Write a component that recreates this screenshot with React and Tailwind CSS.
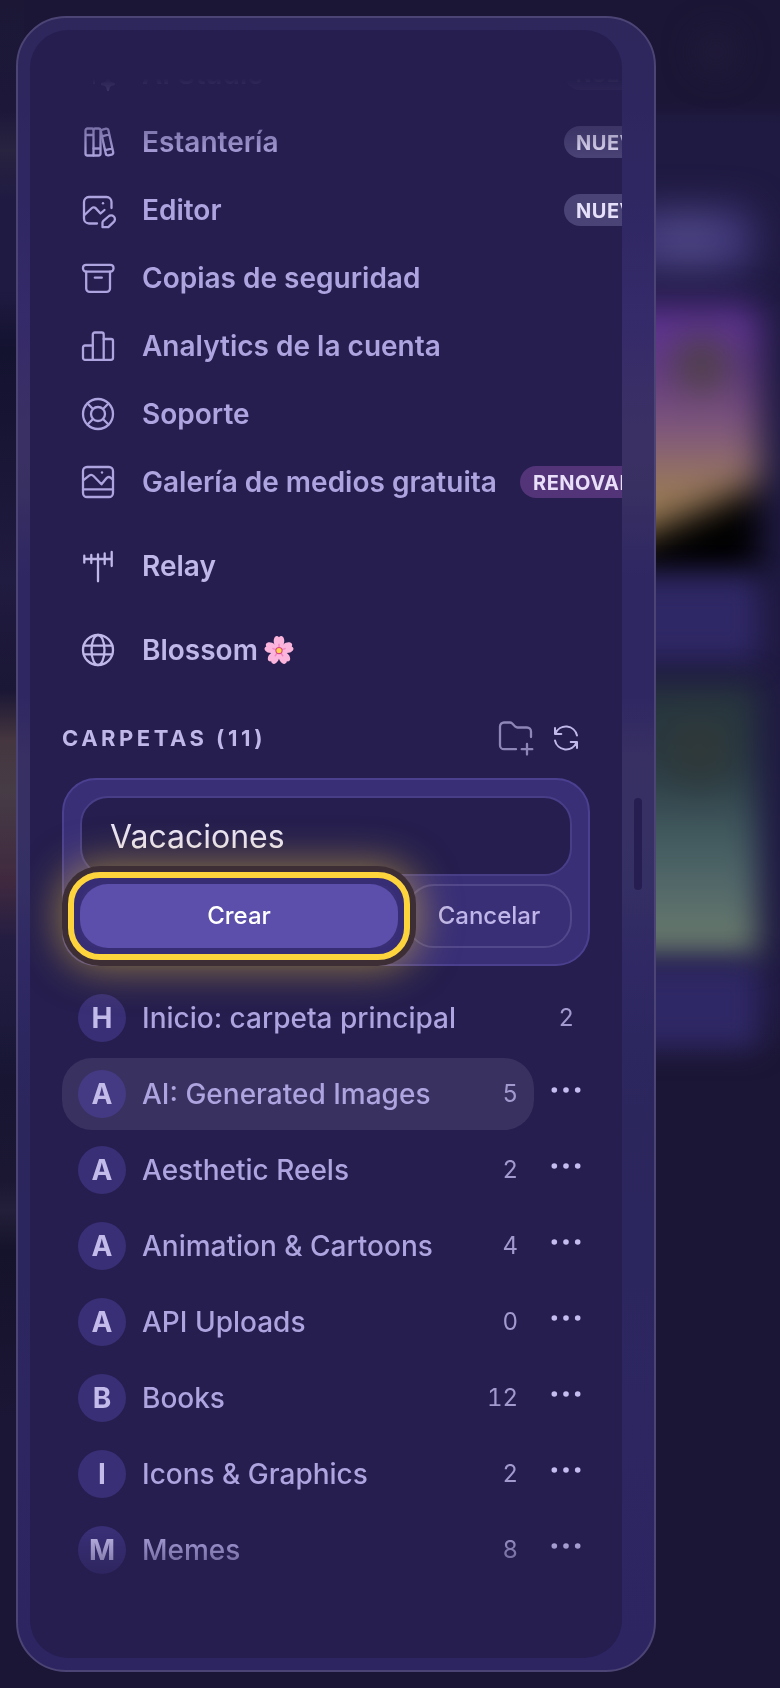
const menuItems = [
  { label: "AI Studio", icon: "spark", badge: "NUEVO" },
  { label: "Estantería", icon: "books", badge: "NUEVO" },
  { label: "Editor", icon: "editor", badge: "NUEVO" },
  { label: "Copias de seguridad", icon: "archive" },
  { label: "Analytics de la cuenta", icon: "bars" },
  { label: "Soporte", icon: "support" },
  { label: "Galería de medios gratuita", icon: "gallery", badge: "RENOVADO" },
];

const folders = [
  { letter: "H", name: "Inicio: carpeta principal", count: 2, root: true },
  { letter: "A", name: "AI: Generated Images", count: 5, active: true },
  { letter: "A", name: "Aesthetic Reels", count: 2 },
  { letter: "A", name: "Animation & Cartoons", count: 4 },
  { letter: "A", name: "API Uploads", count: 0 },
  { letter: "B", name: "Books", count: 12 },
  { letter: "I", name: "Icons & Graphics", count: 2 },
  { letter: "M", name: "Memes", count: 8 },
];

const iconShapes = {
  spark: (
    <>
      <path d="M12 3v22M5 14h14" />
      <path d="M26 20c.8 4 1.600 5.200 6 6-4.400.8-5.200 2-6 6-.8-4-1.600-5.200-6-6 4.400-.8 5.200-2 6-6z" fill="currentColor" />
    </>
  ),
  books: (
    <>
      <path d="M5.500 2.500h4.500a1.500 1.500 0 0 1 1.500 1.500v25.500h-6a2 2 0 0 1-2-2v-23a2 2 0 0 1 2-2zM3.500 9h8" />
      <path d="M11.500 4A1.500 1.500 0 0 1 13 2.500h3.500a2 2 0 0 1 2 2v23a2 2 0 0 1-2 2h-5M11.500 22.500h7" />
      <path d="M20.500 3.600l3.500-.9a2 2 0 0 1 2.400 1.500l4.800 22a2 2 0 0 1-1.500 2.400l-3.400.8a2 2 0 0 1-2.400-1.500L19 6a2 2 0 0 1 1.500-2.400zM20 10.300l7.200-1.900M23.400 24.200l7-1.900" />
    </>
  ),
  editor: (
    <>
      <path d="M29.500 14V8a5 5 0 0 0-5-5h-17.500a5 5 0 0 0-5 5v16.500a5 5 0 0 0 5 5h8" />
      <path d="M2.500 21l7.400-7a2.600 2.600 0 0 1 3.700.1l4.900 5.400 4-3.500" />
      <circle cx="21" cy="9.300" r="1.200" fill="currentColor" stroke="none" />
      <path d="M20.500 33.200v-4.600a2 2 0 0 1 .6-1.400l5.300-4.700a3.800 3.800 0 0 1 5.400 5.400l-4.900 4.700a2 2 0 0 1-1.400.6z" />
    </>
  ),
  archive: (
    <>
      <rect x="1" y="2.800" width="30.500" height="6.800" rx="3" />
      <path d="M4.200 9.600v16.800a3.500 3.500 0 0 0 3.500 3.500h16.800a3.500 3.500 0 0 0 3.500-3.500V9.600M12.800 15.700h7" />
    </>
  ),
  bars: (
    <>
      <path d="M10.800 29.800H3a2 2 0 0 1-2-2v-10.300a2 2 0 0 1 2-2h7.800" />
      <path d="M10.800 29.800V4.500a2 2 0 0 1 2-2h6.900a2 2 0 0 1 2 2v25.300z" />
      <path d="M21.700 9h7.300a2 2 0 0 1 2 2v16.800a2 2 0 0 1-2 2h-7.300" />
    </>
  ),
  support: (
    <>
      <circle cx="16" cy="16" r="15" />
      <circle cx="16" cy="16" r="7" />
      <path d="M5.500 5.500l5.500 5.500M26.500 5.500L21 11M5.500 26.500L11 21M26.500 26.500L21 21" />
    </>
  ),
  gallery: (
    <>
      <rect x="1" y="1" width="30" height="30" rx="4" />
      <path d="M1 23.300h30" />
      <path d="M1.500 14.200l5.700-4.500a3.200 3.200 0 0 1 4.300.3l8 8.300 4.900-6.100a3.200 3.200 0 0 1 4.400-.4l2.200 1.900" />
      <circle cx="20" cy="6.500" r="1.200" fill="currentColor" stroke="none" />
    </>
  ),
  relay: (
    <path d="M2.300 9h27.400M16 4.300v27M2.300 5.700v7M9.300 5v8M22.700 3.500v10.500M29.700 2v14" />
  ),
  globe: (
    <>
      <circle cx="16" cy="16" r="15" />
      <ellipse cx="16" cy="16" rx="6.500" ry="15" />
      <path d="M1.800 11.700h28.400M1.800 20.300h28.400" />
    </>
  ),
};

function Icon({ name }) {
  return (
    <svg
      viewBox="0 0 32 32"
      className="h-8 w-8 shrink-0 overflow-visible"
      fill="none"
      stroke="currentColor"
      strokeWidth="2.300"
      strokeLinecap="round"
      strokeLinejoin="round"
    >
      {iconShapes[name]}
    </svg>
  );
}

function Flower() {
  return (
    <svg viewBox="0 0 28 28" className="ml-[6px] h-[30px] w-[30px]">
      {[0, 72, 144, 216, 288].map((angle) => (
        <g key={angle} transform={`rotate(${angle} 14 14.500)`}>
          <path
            d="M14 14.500C9.500 11 7.800 5.500 10 2.200c1.200-1.600 2.800-1.500 4-.2 1.200-1.300 2.800-1.400 4 .2 2.200 3.300.5 8.800-4 12.300z"
            fill="#fbb4dc"
          />
          <path d="M14 14V8.500" stroke="#f283c0" strokeWidth="1.300" strokeLinecap="round" />
        </g>
      ))}
      <circle cx="14" cy="14.500" r="3.400" fill="#d9467f" />
      <circle cx="14" cy="14.500" r="2.400" fill="#fbd34d" />
    </svg>
  );
}

function MenuRow({ item }) {
  return (
    <div className="flex h-[68px] w-[594px] items-center pl-5 text-[#aea4df]">
      <Icon name={item.icon} />
      <span className="ml-7 whitespace-nowrap text-[28px] font-semibold">{item.label}</span>
      {item.badge === "NUEVO" && (
        <span className="ml-auto flex h-8 w-[92px] items-center rounded-full bg-[#4a4375] pt-px pl-3 text-[20px] font-bold tracking-[0.5px] text-[#e6e0fa]">
          {item.badge}
        </span>
      )}
      {item.badge === "RENOVADO" && (
        <span className="ml-auto flex h-8 w-[136px] items-center rounded-full bg-[#533478] pt-px pl-[13px] text-[20px] font-bold tracking-[0.5px] text-[#eadff8]">
          {item.badge}
        </span>
      )}
    </div>
  );
}

function FolderRow({ folder }) {
  return (
    <div className="flex h-[72px] items-center">
      <div
        className={
          "flex h-full flex-1 items-center rounded-[30px] px-4 " +
          (folder.active ? "bg-[#393160]" : "")
        }
      >
        <span
          className={
            "flex h-12 w-12 items-center justify-center rounded-full text-[28px] font-bold text-[#c3bbea] " +
            (folder.active ? "bg-[#443a83]" : "bg-[#392f76]")
          }
        >
          {folder.letter}
        </span>
        <span className="ml-4 text-[28px] font-medium text-[#aea4df]">{folder.name}</span>
        <span className="ml-auto text-[24px] tabular-nums text-[#a299ce]">
          {folder.count}
        </span>
      </div>
      {!folder.root && (
        <svg viewBox="0 0 56 72" className="h-[72px] w-14" fill="#c5bcf0">
          <circle cx="20.300" cy="32" r="2.800" />
          <circle cx="32" cy="32" r="2.800" />
          <circle cx="43.700" cy="32" r="2.800" />
        </svg>
      )}
    </div>
  );
}

function CreateFolderForm() {
  return (
    <div className="flex h-[188px] flex-col gap-2 rounded-[34px] border-2 border-[#4b4090] bg-[#392f77] p-4">
      <div className="flex h-20 items-center rounded-[28px] border-2 border-[#483e88] bg-[#251e4e] pt-[2px] pl-7 text-[32px] text-[#e8e2f4]">
        Vacaciones
      </div>
      <div className="flex h-16 gap-2 text-[24px] font-medium">
        <button className="relative w-[318px] rounded-[28px] bg-[#5b4fab] text-white">
          <span className="absolute -inset-3 rounded-[32px] border-[6px] border-[#fdd43c] shadow-[0_0_0_6px_#3d2e35,0_0_40px_8px_rgba(253,212,60,0.5),inset_0_0_0_6px_#372d75]"></span>
          <span className="relative">Crear</span>
        </button>
        <button className="flex-1 rounded-[28px] border-2 border-[#51478b] text-[#c0b6ea]">
          Cancelar
        </button>
      </div>
    </div>
  );
}

function Backdrop() {
  return (
    <div className="absolute inset-0 flex justify-between overflow-hidden bg-[#1b1635]">
      <div className="w-6 bg-[linear-gradient(180deg,#1b1735_0px,#1d183a_110px,#28233f_150px,#1f1a42_200px,#1f1a42_290px,#13122f_350px,#171433_420px,#201b40_580px,#1a1635_690px,#45363f_740px,#463c46_790px,#40293f_880px,#241d42_940px,#1d1a3d_1020px,#171532_1080px,#1b1733_1180px,#231f3a_1210px,#15122b_1250px,#1b1635_1420px)]"></div>
      <div className="w-[140px] bg-[linear-gradient(180deg,#1b1635_0px,#1b1635_100px,#1f1a42_125px,#1f1a42_1000px,#1b1635_1060px)]">
        <div className="flex flex-col items-start">
          <div className="mt-8 ml-14 h-10 w-10 rounded-full bg-[#221c3b] blur-lg"></div>
          <div className="mt-[136px] -ml-8 h-16 w-[146px] rounded-2xl bg-[radial-gradient(circle_at_55%_50%,#514a87_0px,#3d3576_50px)] blur-[18px]"></div>
          <div className="mt-7 -ml-8 h-[270px] w-[150px] blur-[17px]">
            <svg viewBox="0 0 150 270" className="h-full w-full overflow-visible">
              <defs>
                <linearGradient id="dusk" x1="0" y1="0" x2="0" y2="1">
                  <stop offset="0" stopColor="#5e3198" />
                  <stop offset="0.25" stopColor="#633a82" />
                  <stop offset="0.5" stopColor="#835c7a" />
                  <stop offset="0.7" stopColor="#9a7a58" />
                  <stop offset="1" stopColor="#8f7648" />
                </linearGradient>
              </defs>
              <rect x="-30" y="6" width="182" height="264" rx="10" fill="url(#dusk)" />
              <circle cx="94" cy="64" r="30" fill="#4f3f4c" />
              <path d="M-30 264L152 184V272H-30z" fill="#000" />
            </svg>
          </div>
          <div className="mt-2 -ml-8 h-[82px] w-[150px] bg-[#2f2866] blur-[14px]"></div>
          <div className="mt-6 -ml-14 h-[272px] w-[174px] bg-[radial-gradient(circle_at_66%_24%,#343937_0px,#2b383c_30px,transparent_50px),linear-gradient(180deg,#26343c_0%,#2a3b43_30%,#41595e_55%,#53696a_75%,#697a6c_95%)] blur-[15px]"></div>
          <div className="mt-2 -ml-8 h-[84px] w-[150px] bg-[#2f2866] blur-[14px]"></div>
        </div>
      </div>
    </div>
  );
}

function App() {
  return (
    <div className="relative h-[1688px] w-[780px] overflow-hidden p-4 font-['Inter',sans-serif]">
      <Backdrop />
      <div className="relative flex h-[1656px] w-[640px] items-center rounded-[50px] border-2 border-[#4b4474] bg-[linear-gradient(180deg,#2e275c_0px,#2e2762_180px,#352a6a_300px,#3b3064_410px,#393062_470px,#2e2762_560px,#2e2762_680px,#383063_740px,#353064_860px,#2f2864_950px,#2b265c_1100px,#2d2661_1400px,#2d2562_1652px)] bg-origin-border pl-3">
        <div className="h-[1628px] w-[592px] overflow-hidden rounded-[38px] bg-[#251e4e] py-12">
          <div className="h-[1532px] overflow-hidden px-8 [mask-image:linear-gradient(180deg,transparent,#000_80px,#000_calc(100%-80px),transparent)]">
            <div className="-mt-[38px]">
              {menuItems.map((item) => (
                <MenuRow key={item.label} item={item} />
              ))}
            </div>
            <div className="mt-2 text-[28px] font-semibold text-[#c0b8e8]">
              <div className="flex h-[84px] items-center pl-5">
                <Icon name="relay" />
                <span className="ml-7">Relay</span>
              </div>
              <div className="flex h-[84px] items-center pl-5">
                <Icon name="globe" />
                <span className="ml-7">Blossom</span>
                <Flower />
              </div>
            </div>
            <div className="flex h-[86px] items-center pt-[6px] text-[#c0b8e8]">
              <span className="text-[22px] font-bold tracking-[3.500px]">CARPETAS (11)</span>
              <svg
                viewBox="0 0 36 36"
                className="ml-auto h-9 w-9 text-[#8f86b8]"
                fill="none"
                stroke="currentColor"
                strokeWidth="2.300"
                strokeLinecap="round"
                strokeLinejoin="round"
              >
                <path d="M18 29.200H6a4 4 0 0 1-4-4V6.500a4 4 0 0 1 4-4h6a3 3 0 0 1 2 .8l3.400 3.400a3 3 0 0 0 2 .8H29a4 4 0 0 1 4 4V17M29 24v10.500M23.700 29.200h10.600" />
              </svg>
              <svg
                viewBox="0 0 24 24"
                className="mr-3 ml-5 h-6 w-6 overflow-visible"
                fill="none"
                stroke="currentColor"
                strokeWidth="2"
                strokeLinecap="round"
                strokeLinejoin="round"
              >
                <path d="M23 9.500A11.300 11.300 0 0 0 1.500 7.500M1 2v6h6.300M1 14.500A11.300 11.300 0 0 0 22.500 16.500M23 22v-6h-6.300" />
              </svg>
            </div>
            <CreateFolderForm />
            <div className="mt-4 flex flex-col gap-1">
              {folders.map((folder) => (
                <FolderRow key={folder.name} folder={folder} />
              ))}
            </div>
          </div>
        </div>
        <div className="ml-3 h-[92px] w-2 rounded-full bg-[#261e50]"></div>
      </div>
    </div>
  );
}
export default App;
